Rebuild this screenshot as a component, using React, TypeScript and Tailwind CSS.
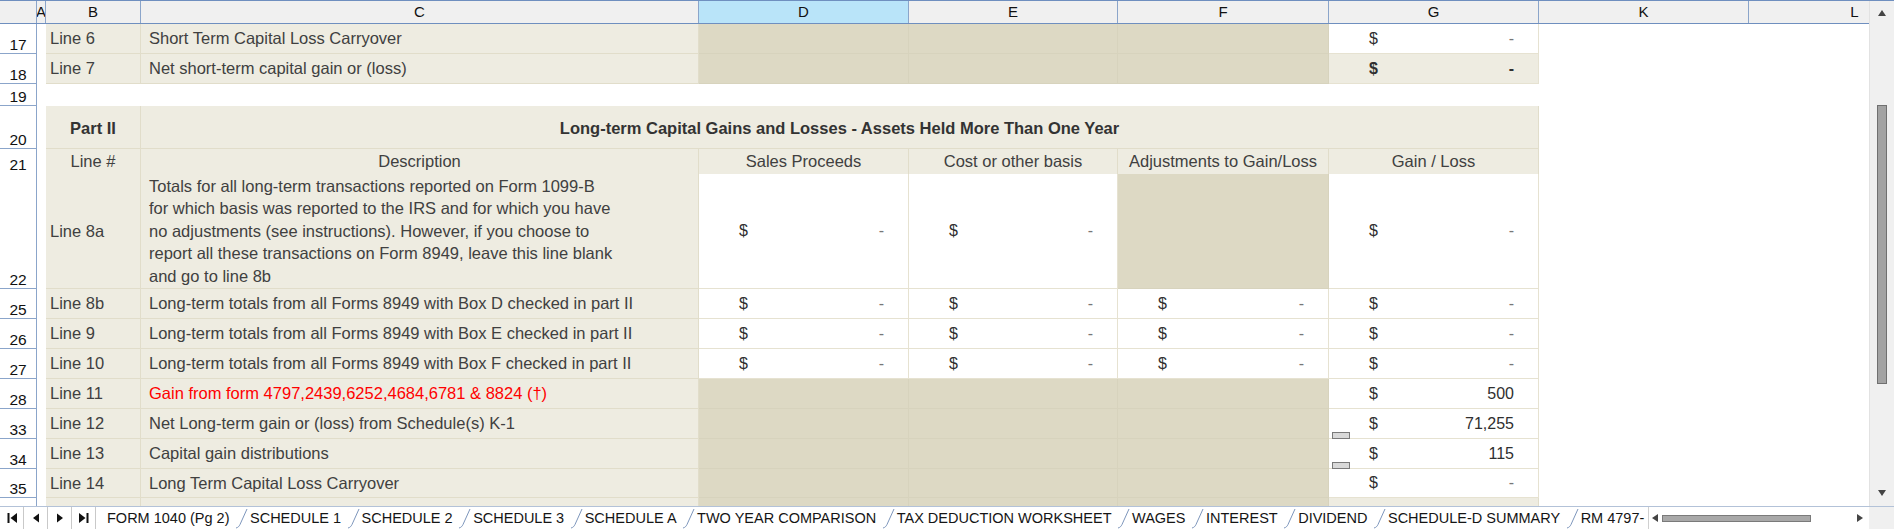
import React from 'react';

// column widths: row header, A, B, C, D, E, F, G, K, L (L is clipped by the scrollbar)
const COLS = 'grid grid-cols-[37px_9px_95px_558px_210px_209px_211px_210px_210px_212px]';

const TABS = [
  'FORM 1040 (Pg 2)',
  'SCHEDULE 1',
  'SCHEDULE 2',
  'SCHEDULE 3',
  'SCHEDULE A',
  'TWO YEAR COMPARISON',
  'TAX DEDUCTION WORKSHEET',
  'WAGES',
  'INTEREST',
  'DIVIDEND',
  'SCHEDULE-D SUMMARY',
  'RM 4797-',
];

function RowNum({ n }: { n?: string }) {
  return (
    <div className="flex items-end justify-center border-r border-b border-[#8ba5ca] bg-white pb-[1px] text-[15.5px] leading-none text-[#111]">
      {n}
    </div>
  );
}

function Blank() {
  return <div className="bg-white" />;
}

function Tan({ children, className = '' }: { children?: React.ReactNode; className?: string }) {
  return (
    <div className={`flex items-center border-r border-b border-[#e1ddca] bg-[#eeece1] whitespace-nowrap ${className}`}>
      {children}
    </div>
  );
}

function Dark() {
  return <div className="border-r border-b border-[#d7d3bd] bg-[#ddd9c4]" />;
}

function Money({ v = '-', bold = false, tan = false, marker = false }: { v?: string; bold?: boolean; tan?: boolean; marker?: boolean }) {
  return (
    <div
      className={`relative flex items-center justify-between border-r border-b border-[#e6e2d1] pl-[40px] pr-[24px] text-[16px] text-[#2f2f2f] ${
        tan ? 'bg-[#eeece1]' : 'bg-white'
      } ${bold ? 'font-bold' : ''}`}
    >
      <span>$</span>
      <span className={v === '-' && !bold ? 'text-[#777]' : ''}>{v}</span>
      {marker && (
        <span className="absolute left-[3px] -bottom-[1px] z-10 h-[7px] w-[18px] border border-[#7a7a7a] bg-[#d9d9d9]" />
      )}
    </div>
  );
}

function HeaderRow() {
  const letters = ['A', 'B', 'C', 'D', 'E', 'F', 'G', 'K', 'L'];
  return (
    <div className={`${COLS} h-[23px] border-b border-[#6f8fbf] bg-[#f0f0f0] text-[15px] text-[#111]`}>
      <div className="border-r border-[#8ba5ca]" />
      {letters.map(l => (
        <div
          key={l}
          className={`flex items-center justify-center overflow-hidden border-r border-[#8ba5ca] ${
            l === 'D' ? 'bg-[#b9e4f9]' : ''
          }`}
        >
          {l}
        </div>
      ))}
    </div>
  );
}

function LineRow({ n, line, desc, red = false, g, h = 'h-[30px]' }: { n: string; line: string; desc: string; red?: boolean; g: React.ReactNode; h?: string }) {
  return (
    <div className={`${COLS} ${h}`}>
      <RowNum n={n} />
      <Blank />
      <Tan className="pl-[4px]">{line}</Tan>
      <Tan className={`pl-[8px] ${red ? 'text-[#ff0000]' : ''}`}>{desc}</Tan>
      <Dark />
      <Dark />
      <Dark />
      {g}
      <Blank />
      <Blank />
    </div>
  );
}

function EntryRow({ n, line, desc }: { n: string; line: string; desc: string }) {
  return (
    <div className={`${COLS} h-[30px]`}>
      <RowNum n={n} />
      <Blank />
      <Tan className="pl-[4px]">{line}</Tan>
      <Tan className="pl-[8px]">{desc}</Tan>
      <Money />
      <Money />
      <Money />
      <Money />
      <Blank />
      <Blank />
    </div>
  );
}

function Arrow({ dir }: { dir: 'up' | 'down' | 'left' | 'right' }) {
  const pts = {
    up: '0,7 4,1 8,7',
    down: '0,1 4,7 8,1',
    left: '7,0 1,4 7,8',
    right: '1,0 7,4 1,8',
  }[dir];
  return (
    <svg width="8" height="8" viewBox="0 0 8 8">
      <polygon points={pts} fill="#444" />
    </svg>
  );
}

function TabSep() {
  return (
    <svg width="13" height="22" viewBox="0 0 13 22" className="shrink-0">
      <path d="M1 21 C3 20.5 4 19.5 5 17.5 L12 2" fill="none" stroke="#7d96bc" strokeWidth="1" />
    </svg>
  );
}

function NavButton({ kind }: { kind: 'first' | 'prev' | 'next' | 'last' }) {
  return (
    <div className="flex w-[24px] items-center justify-center border-r border-[#c9c9c9]">
      <svg width="12" height="12" viewBox="0 0 12 12">
        {kind === 'first' && (
          <>
            <rect x="1.5" y="1" width="2" height="10" fill="#111" />
            <polygon points="11,1 4.5,6 11,11" fill="#111" />
          </>
        )}
        {kind === 'prev' && <polygon points="9,1.5 3,6 9,10.5" fill="#111" />}
        {kind === 'next' && <polygon points="3,1.5 9,6 3,10.5" fill="#111" />}
        {kind === 'last' && (
          <>
            <polygon points="1,1 7.5,6 1,11" fill="#111" />
            <rect x="8.5" y="1" width="2" height="10" fill="#111" />
          </>
        )}
      </svg>
    </div>
  );
}

export default function App() {
  return (
    <div className="h-[529px] w-[1894px] overflow-hidden border-t border-[#6f8fbf] bg-white font-['Liberation_Sans',Arial,sans-serif] text-[16.5px] text-[#404040]">
      <div className="flex h-[505px]">
        {/* sheet */}
        <div className="w-[1869px] overflow-hidden">
          <div className="w-[1961px]">
            <HeaderRow />

            <LineRow n="17" line="Line 6" desc="Short Term Capital Loss Carryover" g={<Money />} />
            <LineRow n="18" line="Line 7" desc="Net short-term capital gain or (loss)" g={<Money bold tan />} />

            {/* 19 blank */}
            <div className={`${COLS} h-[22px]`}>
              <RowNum n="19" />
            </div>

            {/* 20 Part II title */}
            <div className={`${COLS} h-[43px]`}>
              <RowNum n="20" />
              <Blank />
              <Tan className="justify-center pt-[2px] font-bold text-[#333]">Part II</Tan>
              <Tan className="col-span-5 justify-center pt-[2px] font-bold text-[#333]">
                Long-term Capital Gains and Losses - Assets Held More Than One Year
              </Tan>
              <Blank />
              <Blank />
            </div>

            {/* 21 column titles */}
            <div className={`${COLS} h-[25px]`}>
              <RowNum n="21" />
              <Blank />
              <Tan className="justify-center">Line #</Tan>
              <Tan className="justify-center">Description</Tan>
              <Tan className="justify-center">Sales Proceeds</Tan>
              <Tan className="justify-center">Cost or other basis</Tan>
              <Tan className="justify-center">Adjustments to Gain/Loss</Tan>
              <Tan className="justify-center">Gain / Loss</Tan>
              <Blank />
              <Blank />
            </div>

            {/* 22 line 8a */}
            <div className={`${COLS} h-[115px]`}>
              <RowNum n="22" />
              <Blank />
              <Tan className="pl-[4px]">Line 8a</Tan>
              <Tan className="pl-[8px] leading-[22.5px]">
                <div>
                  Totals for all long-term transactions reported on Form 1099-B
                  <br />
                  for which basis was reported to the IRS and for which you have
                  <br />
                  no adjustments (see instructions). However, if you choose to
                  <br />
                  report all these transactions on Form 8949, leave this line blank
                  <br />
                  and go to line 8b
                </div>
              </Tan>
              <Money />
              <Money />
              <Dark />
              <Money />
              <Blank />
              <Blank />
            </div>

            <EntryRow n="25" line="Line 8b" desc="Long-term totals from all Forms 8949 with Box D checked in part II" />
            <EntryRow n="26" line="Line 9" desc="Long-term totals from all Forms 8949 with Box E checked in part II" />
            <EntryRow n="27" line="Line 10" desc="Long-term totals from all Forms 8949 with Box F checked in part II" />

            <LineRow n="28" line="Line 11" desc="Gain from form 4797,2439,6252,4684,6781 & 8824 (†)" red g={<Money v="500" />} />
            <LineRow n="33" line="Line 12" desc="Net Long-term gain or (loss) from Schedule(s) K-1" g={<Money v="71,255" marker />} />
            <LineRow n="34" line="Line 13" desc="Capital gain distributions" g={<Money v="115" marker />} />
            <LineRow n="35" line="Line 14" desc="Long Term Capital Loss Carryover" h="h-[29px]" g={<Money />} />

            {/* partially visible next row */}
            <div className={`${COLS} h-[20px]`}>
              <RowNum />
              <Blank />
              <Tan />
              <Tan />
              <Dark />
              <Dark />
              <Dark />
              <Tan />
              <Blank />
              <Blank />
            </div>
          </div>
        </div>

        {/* vertical scrollbar */}
        <div className="flex w-[25px] flex-col items-center border-l border-[#e2e2e2] bg-[#f0f0f0]">
          <div className="flex h-[24px] items-center">
            <Arrow dir="up" />
          </div>
          <div className="h-[80px]" />
          <div className="h-[279px] w-[10px] border border-[#707070] bg-[#a3a3a3]" />
          <div className="flex-1" />
          <div className="flex h-[26px] items-center">
            <Arrow dir="down" />
          </div>
        </div>
      </div>

      {/* sheet tabs */}
      <div className="flex h-[24px] border-t border-[#b3c2d8] border-b border-b-[#6f8fbf] bg-white text-[14.5px] text-[#151515]">
        <NavButton kind="first" />
        <NavButton kind="prev" />
        <NavButton kind="next" />
        <NavButton kind="last" />
        <div className="flex w-[1552px] items-center overflow-hidden whitespace-nowrap pl-[9px]">
          {TABS.map((t, i) => (
            <React.Fragment key={t}>
              {i > 0 && <TabSep />}
              <span className={`pl-[2px] pr-[5.5px] leading-[22px] ${i === 10 ? 'bg-white' : ''}`}>{t}</span>
            </React.Fragment>
          ))}
        </div>
        <div className="flex w-[221px] items-center border-l border-[#d0d0d0] pl-[2px]">
          <Arrow dir="left" />
          <div className="ml-[3px] h-[7px] w-[149px] border border-[#7a7a7a] bg-[#a8a8a8]" />
          <div className="flex-1" />
          <div className="pr-[5px]">
            <Arrow dir="right" />
          </div>
        </div>
        <div className="w-[25px] bg-[#f0f0f0]" />
      </div>
    </div>
  );
}
